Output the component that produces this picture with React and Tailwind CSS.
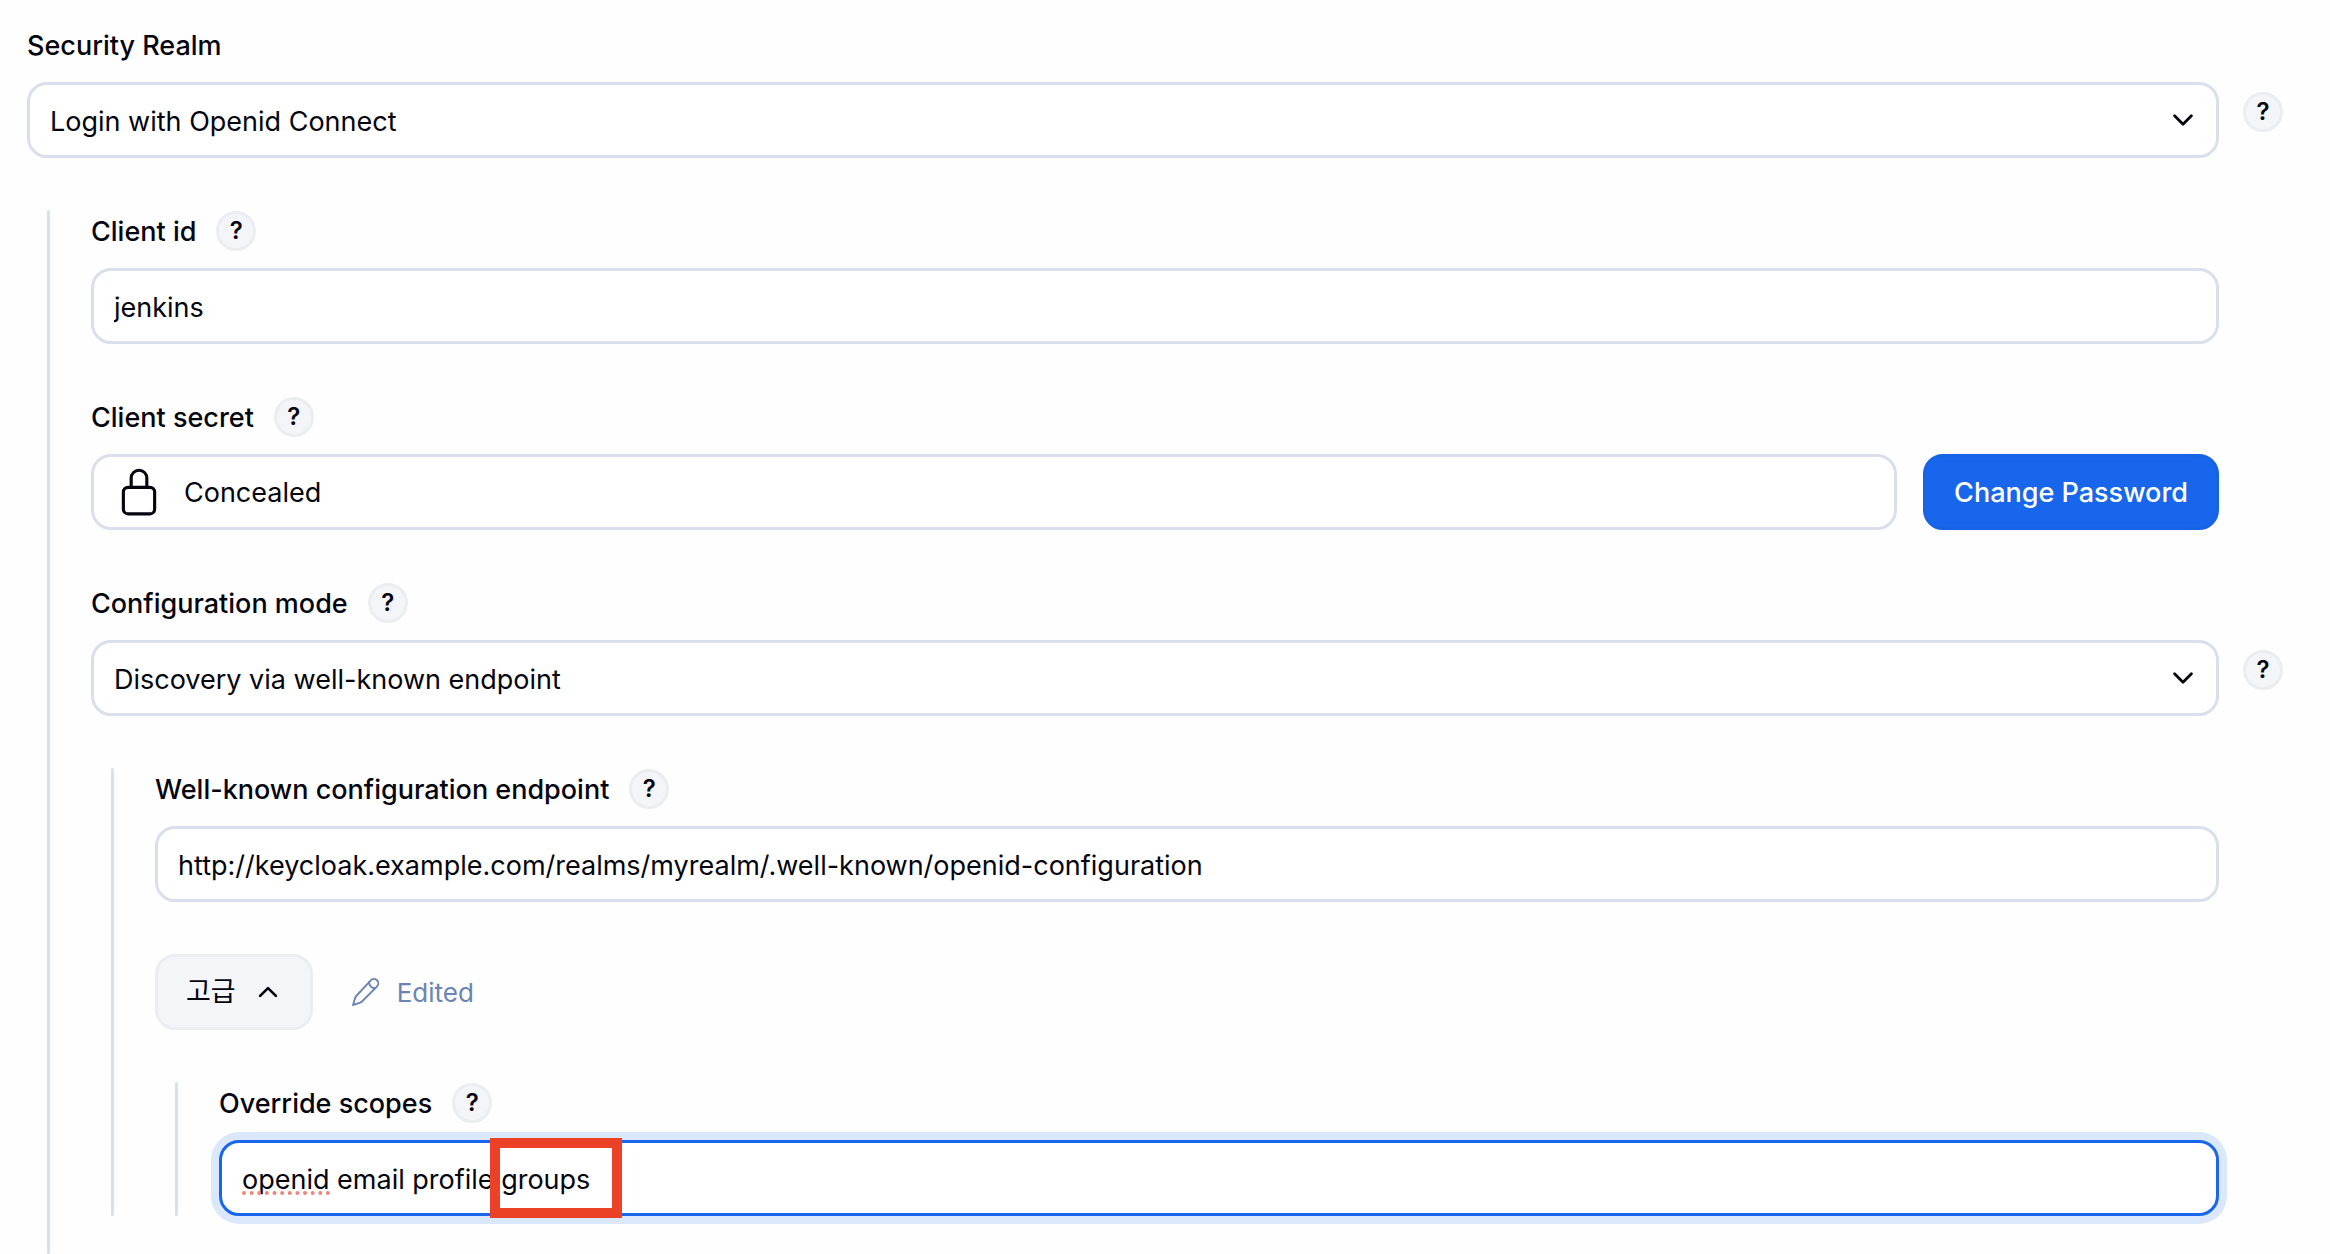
import { useState } from 'react'
import { IoChevronDownOutline, IoChevronUpOutline, IoLockClosedOutline } from 'react-icons/io5'

const HelpButton = ({ topic }) => (
  <button
    type="button"
    aria-label={`Help for ${topic}`}
    className="flex size-10 shrink-0 items-center justify-center rounded-full border-3 border-[#ecedf1] bg-[#f4f5f9] text-2xl leading-none font-semibold"
  >
    ?
  </button>
)

const FieldLabel = ({ htmlFor, children, help }) => (
  <div className="mb-4 flex h-[42px] items-center gap-5">
    <label htmlFor={htmlFor} className="pt-0.5 font-medium">{children}</label>
    {help && <HelpButton topic={children} />}
  </div>
)

const TextInput = ({ id, value, onChange }) => (
  <input
    id={id}
    type="text"
    value={value}
    onChange={(e) => onChange(e.target.value)}
    className="h-19 w-full rounded-[20px] border-3 border-[#d9e0eb] bg-white px-5 pt-0.5 outline-none"
  />
)

// Select with a help button on its right hand side
const SelectRow = ({ id, topic, value, onChange, options }) => (
  <div className="flex items-start gap-6">
    <div className="relative flex-1">
      <select
        id={id}
        value={value}
        onChange={(e) => onChange(e.target.value)}
        className="h-19 w-full appearance-none rounded-[20px] border-3 border-[#d9e0eb] bg-white px-5 pt-1 outline-none"
      >
        {options.map((option) => (
          <option key={option}>{option}</option>
        ))}
      </select>
      <IoChevronDownOutline className="pointer-events-none absolute top-[23px] right-[21px] size-[30px]" />
    </div>
    <div className="pt-[10px]">
      <HelpButton topic={topic} />
    </div>
  </div>
)

const NestedGroup = ({ children, className = '' }) => (
  <div className={`mt-13 ml-5 flex ${className}`}>
    <div className="w-[3px] shrink-0 rounded-full bg-[#d9e0eb]" />
    <div className="min-w-0 flex-1 pl-[41px]">{children}</div>
  </div>
)

const PencilIcon = () => (
  <svg viewBox="0 0 30 30" className="size-[30px]" fill="none" stroke="currentColor" strokeWidth="1.9" strokeLinejoin="round" strokeLinecap="round">
    <path d="M2 28l2.200-7.200q.3-1 1-1.800L19.800 3.400a4.300 4.300 0 0 1 6.300 6L11 24.500q-.8.8-1.800 1.200z" />
    <path d="M18 5.300q.6 5.600 6.300 6" />
  </svg>
)

const App = () => {
  const [realm, setRealm] = useState('Login with Openid Connect')
  const [clientId, setClientId] = useState('jenkins')
  const [mode, setMode] = useState('Discovery via well-known endpoint')
  const [endpoint, setEndpoint] = useState('http://keycloak.example.com/realms/myrealm/.well-known/openid-configuration')
  const [advancedOpen, setAdvancedOpen] = useState(true)
  const [scopes, setScopes] = useState('openid email profile groups')

  return (
    <form className="flex min-h-screen flex-col bg-[#fefefe] pt-6 pr-[47px] pl-[27px] font-[Inter,'Noto_Sans_CJK_KR',sans-serif] text-[27px] leading-9 text-[#05050f]">
      <FieldLabel htmlFor="realm">Security Realm</FieldLabel>
      <SelectRow
        id="realm"
        topic="Security Realm"
        value={realm}
        onChange={setRealm}
        options={['Login with Openid Connect']}
      />

      <NestedGroup className="grow">
        {/* Client id */}
        <div className="pr-16">
          <FieldLabel htmlFor="client-id" help>Client id</FieldLabel>
          <TextInput id="client-id" value={clientId} onChange={setClientId} />
        </div>

        {/* Client secret */}
        <div className="mt-13 pr-16">
          <FieldLabel htmlFor="change-secret" help>Client secret</FieldLabel>
          <div className="flex gap-[26px]">
            <div className="flex h-19 flex-1 items-center gap-5 rounded-[20px] border-3 border-[#d9e0eb] bg-white px-5">
              <IoLockClosedOutline className="size-[50px]" />
              <span className="pt-0.5">Concealed</span>
            </div>
            <button
              id="change-secret"
              type="button"
              className="h-19 rounded-[20px] border-3 border-[#1763e6] bg-[#1866ec] px-7 pt-0.5 font-medium text-white"
            >
              Change Password
            </button>
          </div>
        </div>

        {/* Configuration mode */}
        <div className="mt-13">
          <FieldLabel htmlFor="mode" help>Configuration mode</FieldLabel>
          <SelectRow
            id="mode"
            topic="Configuration mode options"
            value={mode}
            onChange={setMode}
            options={['Discovery via well-known endpoint']}
          />
        </div>

        <NestedGroup>
          <div className="pr-16">
            <FieldLabel htmlFor="endpoint" help>Well-known configuration endpoint</FieldLabel>
            <TextInput id="endpoint" value={endpoint} onChange={setEndpoint} />
          </div>

          <div className="mt-13 flex items-center gap-[38px]">
            <button
              type="button"
              aria-expanded={advancedOpen}
              onClick={() => setAdvancedOpen(!advancedOpen)}
              className="flex h-19 items-center gap-[18px] rounded-[20px] border-3 border-[#ecedf1] bg-[#f4f5f9] px-7"
            >
              고급
              <IoChevronUpOutline className={`size-7 ${advancedOpen ? '' : 'rotate-180'}`} />
            </button>
            <span className="flex items-center gap-4 text-[26px] text-[#6b84b3]">
              <PencilIcon />
              <span className="pt-0.5">Edited</span>
            </span>
          </div>

          {advancedOpen && (
            <NestedGroup>
              <div className="pr-16">
                <FieldLabel htmlFor="scopes" help>Override scopes</FieldLabel>
                <div className="relative">
                  <input
                    id="scopes"
                    type="text"
                    spellCheck={false}
                    value={scopes}
                    onChange={(e) => setScopes(e.target.value)}
                    className="block h-19 w-full rounded-[20px] border-3 border-[#1866ec] bg-white px-5 pt-0.5 ring-8 ring-[#dbe7fb] outline-none"
                  />
                  {/* spelling mark under the first word */}
                  <div className="pointer-events-none absolute top-[51px] left-[23px] w-[88px] border-b-4 border-dotted border-[#f0857a]" />
                  {/* highlight around "groups" */}
                  <div className="pointer-events-none absolute -top-0.5 left-[271px] h-20 w-33 border-10 border-[#eb4127]" />
                </div>
              </div>
            </NestedGroup>
          )}
        </NestedGroup>
      </NestedGroup>
    </form>
  )
}

export default App
